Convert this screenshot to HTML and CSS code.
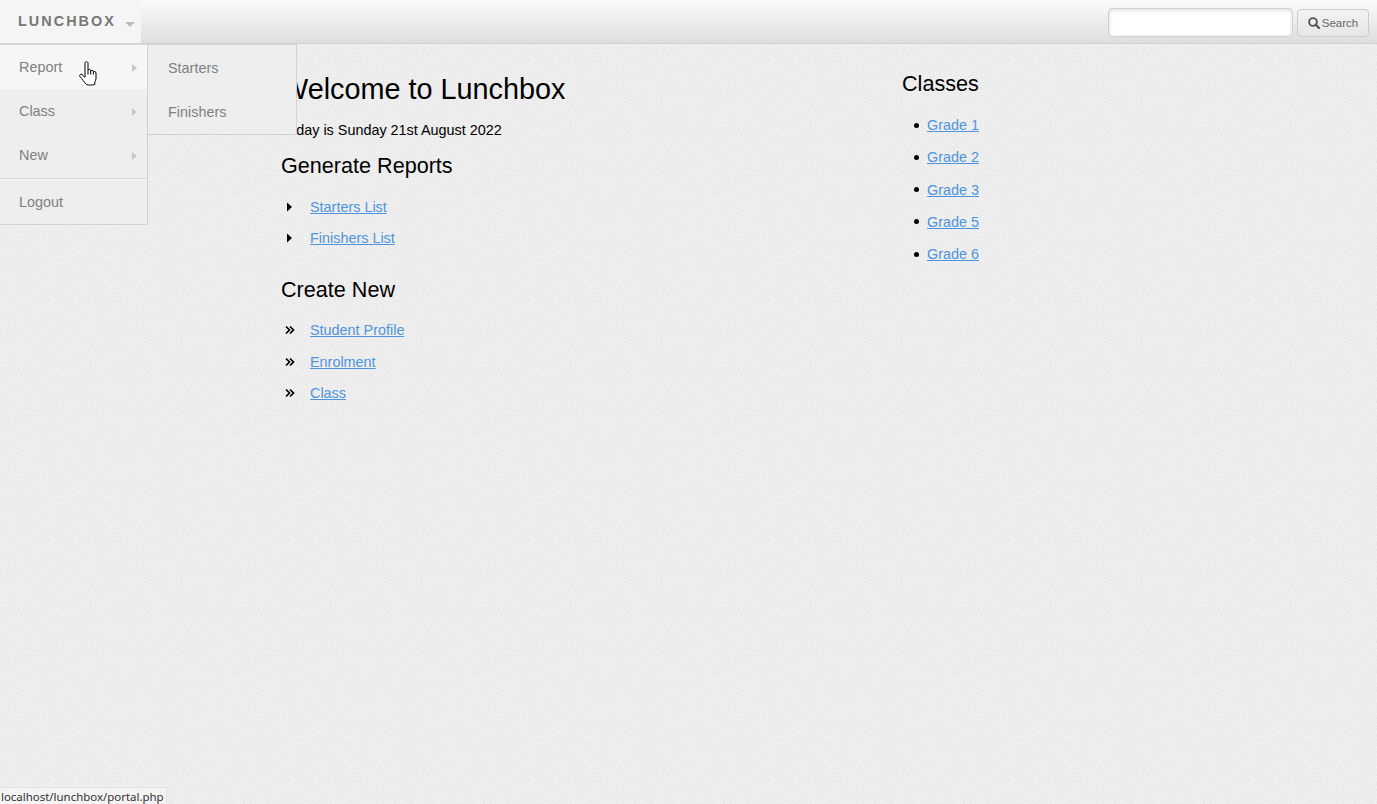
FILE: index.html
```html
<!DOCTYPE html>
<html lang="en">
<head>
<meta charset="utf-8">
<title>Lunchbox</title>
<link rel="stylesheet" href="styles.css">
</head>
<body>
<header class="topbar">
  <div class="brand"><span class="brand-name">LUNCHBOX</span><span class="brand-caret"></span></div>
  <form class="search">
    <input class="search-input" type="text" aria-label="Search">
    <button class="search-btn" type="button">
      <svg class="search-icon" viewBox="0 0 12 12" width="12" height="12"><circle cx="5" cy="5" r="3.900" fill="none" stroke="#555" stroke-width="1.900"/><path d="M7.800 7.800 11 11" stroke="#555" stroke-width="2.300" stroke-linecap="round"/></svg>Search
    </button>
  </form>
</header>

<main class="content">
  <section class="col-main">
    <h1>Welcome to Lunchbox</h1>
    <p class="today">Today is Sunday 21st August 2022</p>
    <h2>Generate Reports</h2>
    <ul class="icon-list">
      <li><svg class="marker" viewBox="0 0 10 10" width="10" height="10"><path d="M2 0.500 7 5 2 9.500Z" fill="#000"/></svg><a href="#">Starters List</a></li>
      <li><svg class="marker" viewBox="0 0 10 10" width="10" height="10"><path d="M2 0.500 7 5 2 9.500Z" fill="#000"/></svg><a href="#">Finishers List</a></li>
    </ul>
    <h2 class="second">Create New</h2>
    <ul class="icon-list tall">
      <li><svg class="marker" viewBox="0 0 10 10" width="10" height="10"><path d="M1 1.500 4.500 5 1 8.500M5 1.500 8.500 5 5 8.500" fill="none" stroke="#000" stroke-width="1.700"/></svg><a href="#">Student Profile</a></li>
      <li><svg class="marker" viewBox="0 0 10 10" width="10" height="10"><path d="M1 1.500 4.500 5 1 8.500M5 1.500 8.500 5 5 8.500" fill="none" stroke="#000" stroke-width="1.700"/></svg><a href="#">Enrolment</a></li>
      <li><svg class="marker" viewBox="0 0 10 10" width="10" height="10"><path d="M1 1.500 4.500 5 1 8.500M5 1.500 8.500 5 5 8.500" fill="none" stroke="#000" stroke-width="1.700"/></svg><a href="#">Class</a></li>
    </ul>
  </section>
  <aside class="col-side">
    <h2 class="classes-title">Classes</h2>
    <ul class="class-list">
      <li><a href="#">Grade 1</a></li>
      <li><a href="#">Grade 2</a></li>
      <li><a href="#">Grade 3</a></li>
      <li><a href="#">Grade 5</a></li>
      <li><a href="#">Grade 6</a></li>
    </ul>
  </aside>
</main>

<nav class="menu">
  <a class="menu-item active" href="#">Report<span class="arrow"></span></a>
  <a class="menu-item" href="#">Class<span class="arrow"></span></a>
  <a class="menu-item" href="#">New<span class="arrow"></span></a>
  <div class="menu-divider"></div>
  <a class="menu-item logout" href="#">Logout</a>
</nav>
<nav class="submenu">
  <a class="menu-item" href="#">Starters</a>
  <a class="menu-item" href="#">Finishers</a>
</nav>

<svg class="cursor" viewBox="0 0 18 25" width="18" height="25"><path d="M6 2.200C6 .2 9 .2 9 2.200V9.300C9.300 8 11.500 8 11.700 9.800 12 9 14.200 9 14.400 10.800 14.700 10 17 10.300 17 12V17.500C17 19 16.200 20 15.800 21.200V23.500C13 24.300 10 24.300 7.500 23.500 5.500 21.500 3.500 18.500 .8 15.300 .1 14 1.500 12.800 2.800 13.500L6 16.300Z" fill="#fff" stroke="#000" stroke-width="1" stroke-linejoin="round"/><path d="M9 9.300V13.500M11.700 9.800V13.500M14.400 10.800V13.500" stroke="#000" fill="none"/></svg>

<div class="status">localhost/lunchbox/portal.php</div>
</body>
</html>
```
FILE: styles.css
```css
* { box-sizing: border-box; }
html, body { height: 100%; }
body {
  margin: 0;
  overflow: hidden;
  font-family: "Liberation Sans", Arial, sans-serif;
  color: #000;
  background-color: #f1f1f1;
  background-image: url("data:image/svg+xml,%3Csvg xmlns='http://www.w3.org/2000/svg' width='240' height='240'%3E%3Cfilter id='n' x='0' y='0' width='100%25' height='100%25'%3E%3CfeTurbulence type='fractalNoise' baseFrequency='.85' numOctaves='2' stitchTiles='stitch'/%3E%3CfeColorMatrix values='0 0 0 0 .78 0 0 0 0 .78 0 0 0 0 .78 2.500 0 0 0 -.95'/%3E%3C/filter%3E%3Crect width='240' height='240' filter='url(%23n)'/%3E%3C/svg%3E");
}
.topbar {
  height: 44px;
  display: flex;
  align-items: flex-start;
  justify-content: space-between;
  background: linear-gradient(#fbfbfb, #dedede);
  border-bottom: 1px solid #d0d0d0;
}
.brand {
  width: 141px;
  height: 43px;
  padding: 14px 0 0 18px;
  display: flex;
  background: #f5f5f5;
}
.brand-name {
  font-size: 14.400px;
  font-weight: bold;
  line-height: 15px;
  letter-spacing: 2.050px;
  color: #777;
}
.brand-caret {
  margin: 8px 0 0 9px;
  width: 0;
  height: 0;
  border: 5px solid transparent;
  border-top-color: #bbb;
  border-bottom: 0;
}
.search {
  display: flex;
  align-items: flex-start;
  gap: 4px;
  padding: 8px 8px 0 0;
}
.search-input {
  width: 185px;
  height: 29px;
  background: #fff;
  border: 1px solid #d0d0d0;
  border-radius: 4px;
  box-shadow: inset 0 1px 4px rgba(0, 0, 0, .15);
  margin: 0;
}
.search-btn {
  width: 72px;
  height: 28px;
  margin: 1px 0 0;
  padding: 0;
  display: flex;
  align-items: center;
  justify-content: center;
  gap: 2px;
  font: 11.520px "Liberation Sans", Arial, sans-serif;
  color: #666;
  background: linear-gradient(#f3f3f3, #e6e6e6);
  border: 1px solid #ccc;
  border-radius: 4px;
}
.content {
  display: flex;
  padding: 0 0 0 281px;
}
.col-main { width: 621px; padding-top: 28px; }
.col-side { padding-top: 27px; }
h1 {
  margin: 0;
  font-size: 28.800px;
  font-weight: normal;
  line-height: 34px;
}
.today {
  margin: 15px 0 0;
  font-size: 14.400px;
  line-height: 18px;
}
h2 {
  margin: 14px 0 0;
  font-size: 21.600px;
  font-weight: normal;
  line-height: 26px;
}
h2.second { margin-top: 30px; }
h2.classes-title { margin: 0; }
ul { list-style: none; margin: 0; padding: 0; }
a { color: #4d94dc; }
.icon-list { margin-top: 19px; }
.icon-list li {
  display: flex;
  align-items: center;
  height: 18px;
  margin-bottom: 13.300px;
  font-size: 14.400px;
  line-height: 18px;
}
.icon-list.tall { margin-top: 18px; }
.icon-list.tall li { margin-bottom: 13.500px; }
.marker { flex: none; margin-left: 4px; margin-right: 15px; }
.class-list { margin-top: 19px; }
.class-list li {
  display: flex;
  align-items: center;
  height: 18px;
  font-size: 14.400px;
  line-height: 18px;
  margin-bottom: 14.250px;
}
.class-list li::before {
  content: "";
  flex: none;
  width: 5px;
  height: 5px;
  margin: 0 8px 0 12px;
  border-radius: 50%;
  background: #000;
}
.menu, .submenu {
  position: absolute;
  top: 44px;
  background: #eeeeee;
  border: 1px solid #d2d2d2;
  border-top-color: #d8d8d8;
}
.menu { left: 0; width: 148px; height: 181px; border-left: 0; }
.submenu { left: 148px; width: 149px; height: 91px; border-left: 0; }
.menu-item {
  display: block;
  position: relative;
  height: 44px;
  padding: 13px 0 0 19px;
  font-size: 14.400px;
  line-height: 18px;
  color: #808080;
  text-decoration: none;
}
.menu-item.active { background: #f6f6f6; }
.submenu .menu-item { padding: 14px 0 0 20px; }
.menu-divider { height: 2px; background: #dadada; border-bottom: 1px solid #f8f8f8; margin-top: 1px; }
.logout { height: 44px; }
.arrow {
  position: absolute;
  right: 10px;
  top: 19px;
  width: 0;
  height: 0;
  border-style: solid;
  border-width: 4.500px 0 4.500px 5px;
  border-color: transparent transparent transparent #c8c8c8;
}
.cursor { position: absolute; left: 79px; top: 61px; }
.status {
  position: fixed;
  left: 0;
  bottom: 0;
  height: 17px;
  width: 167px;
  padding: 0 1px;
  font-family: "Noto Sans", "Liberation Sans", sans-serif;
  font-size: 11.450px;
  line-height: 18px;
  color: #333;
  background: #f4f4f4;
  border-top: 1px solid #e2e2e2;
  border-right: 1px solid #e2e2e2;
}
```
